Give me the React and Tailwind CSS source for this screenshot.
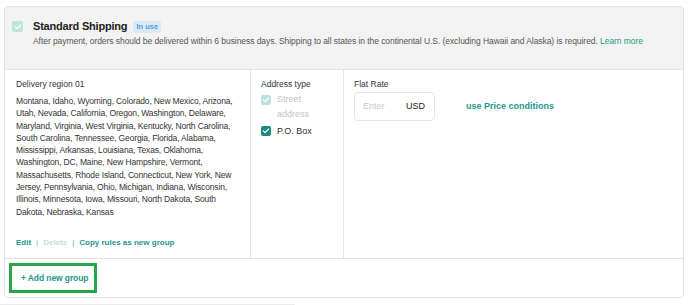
import { Check } from 'lucide-react';

const teal = 'text-[#23978a]';

const CheckBox = ({ disabled }) => (
  <span
    className={`flex items-center justify-center w-[10px] h-[10px] rounded-[2px] shrink-0 ${
      disabled ? 'bg-[#b9e2dc]' : 'bg-[#1c8a7f]'
    }`}
  >
    <Check className="w-[8px] h-[8px] text-white" strokeWidth={3.5} />
  </span>
);

const App = () => {
  return (
    <div
      className="bg-white w-[688px] h-[305px] pt-[6px] px-[4px] text-[#333] overflow-hidden"
      style={{ fontFamily: '"Liberation Sans", Arial, sans-serif' }}
    >
      <div className="border border-[#e4e4e4] rounded-[4px] overflow-hidden">
        {/* header */}
        <div className="bg-[#f3f3f3] h-[63px] border-b border-[#e4e4e4] pl-[7px] pt-[13px] flex gap-[10px]">
          <div className="pt-[1px]">
            <span className="flex items-center justify-center w-[11px] h-[11px] rounded-[2px] bg-[#bfe4de]">
              <Check className="w-[8px] h-[8px] text-white" strokeWidth={3.5} />
            </span>
          </div>
          <div>
            <div className="flex items-center gap-[6px] h-[13px]">
              <span className="text-[11px] font-bold tracking-[-0.2px] text-[#222]">Standard Shipping</span>
              <span className="text-[7.5px] font-bold text-[#5c9bd6] bg-[#dceaf7] rounded-[2px] px-[3px] leading-[12px]">
                In use
              </span>
            </div>
            <p className="text-[8.5px] leading-[12px] mt-[2px] tracking-[-0.06px] text-[#555]">
              After payment, orders should be delivered within 6 business days. Shipping to all states in the continental U.S. (excluding Hawaii and Alaska) is required.{' '}
              <span className={teal}>Learn more</span>
            </p>
          </div>
        </div>

        {/* body */}
        <div className="flex h-[189px] border-b border-[#e4e4e4]">
          <div className="w-[246px] border-r border-[#e4e4e4] pl-[11px] pr-[9px] pt-[8px] pb-[9px] flex flex-col">
            <div className="text-[8.5px] leading-[12px] text-[#333]">Delivery region 01</div>
            <p className="text-[8.5px] leading-[12.3px] tracking-[-0.15px] mt-[5px] text-[#333]">
              Montana, Idaho, Wyoming, Colorado, New Mexico, Arizona, Utah, Nevada, California, Oregon, Washington, Delaware, Maryland, Virginia, West Virginia, Kentucky, North Carolina, South Carolina, Tennessee, Georgia, Florida, Alabama, Mississippi, Arkansas, Louisiana, Texas, Oklahoma, Washington, DC, Maine, New Hampshire, Vermont, Massachusetts, Rhode Island, Connecticut, New York, New Jersey, Pennsylvania, Ohio, Michigan, Indiana, Wisconsin, Illinois, Minnesota, Iowa, Missouri, North Dakota, South Dakota, Nebraska, Kansas
            </p>
            <div className="mt-auto flex items-center gap-[5px] text-[8px] font-bold leading-[12px]">
              <span className={teal}>Edit</span>
              <span className="text-[#8fc4bd] font-normal">|</span>
              <span className="text-[#bfe0db]">Delete</span>
              <span className="text-[#5ea79e] font-normal">|</span>
              <span className={teal}>Copy rules as new group</span>
            </div>
          </div>

          <div className="w-[93px] border-r border-[#e4e4e4] pl-[10px] pr-[8px] pt-[8px]">
            <div className="text-[8.5px] leading-[12px] text-[#333]">Address type</div>
            <div className="mt-[2px] flex gap-[6px]">
              <div className="pt-[3px]">
                <CheckBox disabled />
              </div>
              <span className="text-[9px] leading-[14.5px] text-[#c4c4c4]">Street address</span>
            </div>
            <div className="mt-[3px] flex items-center gap-[6px]">
              <CheckBox />
              <span className="text-[9px] leading-[14px] text-[#333]">P.O. Box</span>
            </div>
          </div>

          <div className="flex-1 pl-[10px] pt-[8px]">
            <div className="text-[8.5px] leading-[12px] text-[#333]">Flat Rate</div>
            <div className="mt-[2px] flex items-center gap-[31px]">
              <div className="w-[81px] h-[29px] border border-[#e6e6e6] rounded-[4px] flex items-center justify-between pl-[8px] pr-[9px]">
                <span className="text-[9px] text-[#c8c8c8]">Enter</span>
                <span className="text-[9px] text-[#222]">USD</span>
              </div>
              <span className={`text-[9px] font-bold ${teal}`}>use Price conditions</span>
            </div>
          </div>
        </div>

        {/* footer */}
        <div className="h-[38px] pl-[4px] pt-[4px]">
          <div className="w-[88px] h-[30px] border-[3px] border-[#29a548] flex items-center pl-[9px]">
            <span className={`text-[8.5px] font-bold tracking-[-0.1px] ${teal}`}>+ Add new group</span>
          </div>
        </div>
      </div>
      <div className="mt-[6px] -ml-[4px] w-[295px] border-t border-[#ececec]" />
    </div>
  );
};

export default App;
